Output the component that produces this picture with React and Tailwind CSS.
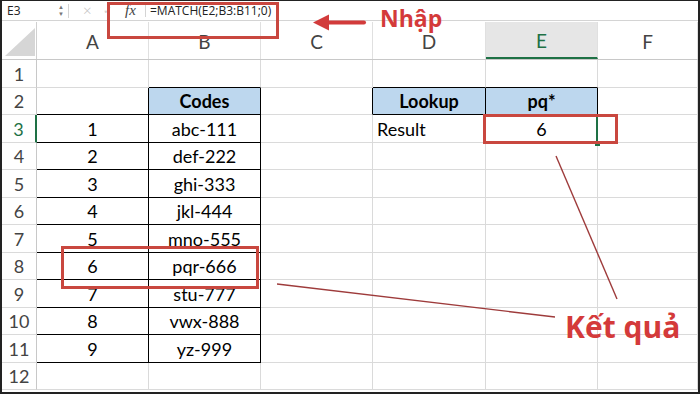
import React from "react"

const COLS = ["A", "B", "C", "D", "E", "F"]
const WIDTHS = ["w-[112px]", "w-[112px]", "w-[112px]", "w-[113px]", "w-[112px]", "flex-1"]

// cell contents: row -> col -> [text, kind]
const DATA = {
  2: { B: ["Codes", "head"], D: ["Lookup", "head"], E: ["pq*", "head"] },
  3: { A: ["1"], B: ["abc-111"], D: ["Result", "left"], E: ["6"] },
  4: { A: ["2"], B: ["def-222"] },
  5: { A: ["3"], B: ["ghi-333"] },
  6: { A: ["4"], B: ["jkl-444"] },
  7: { A: ["5"], B: ["mno-555"] },
  8: { A: ["6"], B: ["pqr-666"] },
  9: { A: ["7"], B: ["stu-777"] },
  10: { A: ["8"], B: ["vwx-888"] },
  11: { A: ["9"], B: ["yz-999"] },
}

// cells with black borders
const boxed = (r, c) => {
  if (r === 2 && (c === "B" || c === "D" || c === "E")) return true
  if (r >= 3 && r <= 11 && (c === "A" || c === "B")) return true
  return false
}

const nextCol = (c) => COLS[COLS.indexOf(c) + 1]

function Cell({ r, c, i }) {
  const cell = DATA[r] && DATA[r][c]
  const right = boxed(r, c) || boxed(r, nextCol(c)) ? "border-r-black" : "border-r-[#dadada]"
  const bottom = boxed(r, c) || boxed(r + 1, c) ? "border-b-black" : "border-b-[#dadada]"
  const fill = cell && cell[1] === "head" ? "bg-[#bdd7ee] font-bold" : "bg-white"
  const align = cell && cell[1] === "left" ? "justify-start pl-[4px]" : "justify-center"
  return (
    <div
      className={`${WIDTHS[i]} shrink-0 h-full pt-[2px] border-r border-b ${right} ${bottom} ${fill} flex items-center ${align} text-[18px] text-black`}
    >
      {cell ? cell[0] : ""}
    </div>
  )
}

export default function App() {
  const rows = Array.from({ length: 12 }, (_, k) => k + 1)

  return (
    <div
      className="relative w-[700px] h-[394px] overflow-hidden bg-white border-l-2 border-t border-r-2 border-b-2 border-[#222]"
      style={{ fontFamily: "Lato, 'Open Sans', sans-serif" }}
    >
      {/* Formula bar */}
      <div className="flex items-center h-[20px] border-b border-[#d4d4d4] text-[12px] text-[#222]" style={{ fontFamily: "'Open Sans', sans-serif" }}>
        <div className="w-[54px] pl-[5px]">E3</div>
        <div className="flex flex-col items-center text-[6px] leading-[7px] text-[#777] w-[10px]">
          <span>▲</span>
          <span>▼</span>
        </div>
        <div className="w-px h-[14px] bg-[#d4d4d4] ml-[2px]" />
        <div className="w-[20px] ml-[14px] text-[15px] text-[#c4c4c4] font-light">×</div>
        <div className="w-[18px] text-[11px] text-[#d0d0d0]">✓</div>
        <div className="ml-[4px] w-[20px] italic text-[15px] text-[#444]" style={{ fontFamily: "'Liberation Serif', serif" }}>
          fx
        </div>
        <div className="w-px h-[12px] bg-[#d4d4d4]" />
        <div className="pl-[4px] text-[12px] font-medium">=MATCH(E2;B3:B11;0)</div>
      </div>

      {/* Column headers */}
      <div className="flex h-[38px] mt-px border-b border-[#c8c8c8] text-[19px] text-[#444]">
        <div className="w-[35px] shrink-0 h-full border-r border-[#d0d0d0] relative">
          <div className="absolute right-[1px] bottom-[3px] w-0 h-0 border-l-[30px] border-l-transparent border-b-[28px] border-b-[#d6d6d6]" />
        </div>
        {COLS.map((c, i) => (
          <div
            key={c}
            className={`${WIDTHS[i]} shrink-0 h-full pt-[3px] flex items-center justify-center border-r border-[#e0e0e0] ${
              c === "E" ? "bg-[#e6e6e6] text-[#1e7145] border-b-2 border-b-[#1e7145]" : ""
            }`}
          >
            {c}
          </div>
        ))}
      </div>

      {/* Rows */}
      {rows.map((r) => (
        <div key={r} className="flex h-[27.5px]">
          <div
            className={`w-[35px] shrink-0 h-full pt-[2px] flex items-center justify-center text-[18px] border-b border-b-[#dadada] ${
              r === 3 ? "text-[#1e7145] border-r-2 border-r-[#1e7145]" : "text-[#444] border-r border-r-[#c8c8c8]"
            }`}
          >
            {r}
          </div>
          {COLS.map((c, i) => (
            <Cell key={c} r={r} c={c} i={i} />
          ))}
        </div>
      ))}

      {/* active cell edge + fill handle */}
      <div className="absolute left-[594px] top-[114px] w-[2px] h-[28px] bg-[#1e7145]" />
      <div className="absolute left-[593px] top-[140px] w-[5px] h-[5px] bg-[#1e7145]" />

      {/* Annotations */}
      <div className="absolute left-[105px] top-[1px] w-[172px] h-[37px] border-[3px] border-[#c9473f]" />
      <div className="absolute left-[59px] top-[245px] w-[198px] h-[43px] border-[3px] border-[#c9473f]" />
      <div className="absolute left-[481px] top-[113px] w-[135px] h-[30px] border-[3px] border-[#c9473f]" />

      <svg className="absolute inset-0 pointer-events-none" width="700" height="394">
        <rect x="322" y="19.5" width="42" height="4" rx="2" fill="#d23b3b" />
        <polygon points="311,21.5 327,13.5 327,29.5" fill="#d23b3b" />
        <line x1="275" y1="283" x2="553" y2="316" stroke="#9e3b3b" strokeWidth="1.4" />
        <line x1="554" y1="155" x2="615" y2="298" stroke="#9e3b3b" strokeWidth="1.4" />
      </svg>

      <div
        className="absolute left-[378px] top-[6px] text-[23px] leading-none font-bold text-[#d43a3a]"
        style={{ fontFamily: "'Open Sans', sans-serif" }}
      >
        Nhập
      </div>
      <div
        className="absolute left-[563px] top-[311px] text-[30px] leading-none font-bold text-[#d43a3a]"
        style={{ fontFamily: "'Open Sans', sans-serif" }}
      >
        Kết quả
      </div>
    </div>
  )
}
